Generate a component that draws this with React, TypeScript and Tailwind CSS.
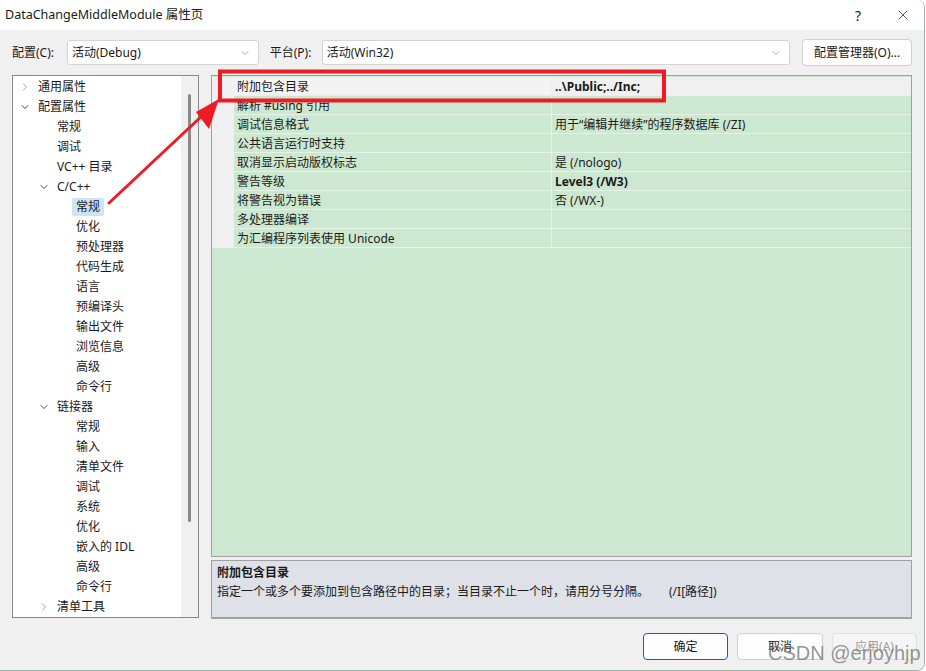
import { ChevronDown, ChevronRight, X } from 'lucide-react'

type TreeItem = { label: string; level: 0 | 1 | 2; chevron?: 'open' | 'closed'; selected?: boolean }

const TREE: TreeItem[] = [
  { label: '通用属性', level: 0, chevron: 'closed' },
  { label: '配置属性', level: 0, chevron: 'open' },
  { label: '常规', level: 1 },
  { label: '调试', level: 1 },
  { label: 'VC++ 目录', level: 1 },
  { label: 'C/C++', level: 1, chevron: 'open' },
  { label: '常规', level: 2, selected: true },
  { label: '优化', level: 2 },
  { label: '预处理器', level: 2 },
  { label: '代码生成', level: 2 },
  { label: '语言', level: 2 },
  { label: '预编译头', level: 2 },
  { label: '输出文件', level: 2 },
  { label: '浏览信息', level: 2 },
  { label: '高级', level: 2 },
  { label: '命令行', level: 2 },
  { label: '链接器', level: 1, chevron: 'open' },
  { label: '常规', level: 2 },
  { label: '输入', level: 2 },
  { label: '清单文件', level: 2 },
  { label: '调试', level: 2 },
  { label: '系统', level: 2 },
  { label: '优化', level: 2 },
  { label: '嵌入的 IDL', level: 2 },
  { label: '高级', level: 2 },
  { label: '命令行', level: 2 },
  { label: '清单工具', level: 1, chevron: 'closed' },
]

const INDENT = ['pl-[6px]', 'pl-[25px]', 'pl-[44px]']

type Prop = { name: string; value: string; bold?: boolean; selected?: boolean }

const PROPS: Prop[] = [
  { name: '附加包含目录', value: '..\\Public;../Inc;', bold: true, selected: true },
  { name: '解析 #using 引用', value: '' },
  { name: '调试信息格式', value: '用于“编辑并继续”的程序数据库 (/ZI)' },
  { name: '公共语言运行时支持', value: '' },
  { name: '取消显示启动版权标志', value: '是 (/nologo)' },
  { name: '警告等级', value: 'Level3 (/W3)', bold: true },
  { name: '将警告视为错误', value: '否 (/WX-)' },
  { name: '多处理器编译', value: '' },
  { name: '为汇编程序列表使用 Unicode', value: '' },
]

function Combo({ text, width }: { text: string; width: string }) {
  return (
    <div className={`${width} h-[25px] bg-white border border-[#d4d4d4] rounded-[3px] flex items-center justify-between pl-[4px] pr-[7px]`}>
      <span>{text}</span>
      <ChevronDown size={12} strokeWidth={1.2} className="text-[#707070]" />
    </div>
  )
}

export default function App() {
  return (
    <div
      className="relative w-[926px] h-[671px] bg-white overflow-hidden text-[12px] text-[#1a1a1a]"
      style={{ fontFamily: '"Noto Sans", "Noto Sans CJK SC", sans-serif' }}
    >
      <div className="flex flex-col h-full w-[925px] border-r border-b border-[#9fb3a6] rounded-tr-[8px] rounded-br-[8px] overflow-hidden">
        <div className="h-[30px] bg-white flex items-center justify-between pl-[5px] pr-[13px] shrink-0">
          <span className="text-[12.5px]">DataChangeMiddleModule 属性页</span>
          <div className="flex items-center gap-[34px]">
            <span className="text-[14px]">?</span>
            <X size={16} strokeWidth={1.1} />
          </div>
        </div>

        <div className="flex-1 bg-[#f0f0f0] flex flex-col px-[12px]">
          <div className="mt-[10px] h-[25px] flex items-center">
            <span className="w-[55px]">配置(C):</span>
            <Combo text="活动(Debug)" width="w-[192px]" />
            <span className="ml-[11px] w-[52px]">平台(P):</span>
            <Combo text="活动(Win32)" width="w-[469px]" />
            <button className="ml-[12px] h-[27px] w-[110px] bg-[#fdfdfd] border border-[#d0d0d0] rounded-[4px] text-[12px]">
              配置管理器(O)...
            </button>
          </div>

          <div className="mt-[10px] flex gap-[12px]">
            <div className="w-[187px] h-[543px] border border-[#828790] bg-white flex">
              <div className="flex-1 pt-[1px]">
                {TREE.map((item, i) => (
                  <div key={i} className={`h-[20px] flex items-center ${INDENT[item.level]}`}>
                    <span className="w-[12px] flex justify-center">
                      {item.chevron === 'closed' && <ChevronRight size={12} strokeWidth={1.6} className="text-[#8a8a8a]" />}
                      {item.chevron === 'open' && <ChevronDown size={12} strokeWidth={1.8} className="text-[#333]" />}
                    </span>
                    <span
                      className={`ml-[3px] h-[18px] px-[4px] flex items-center rounded-[2px] ${item.selected ? 'bg-[#cce4f7]' : ''}`}
                    >
                      {item.label}
                    </span>
                  </div>
                ))}
              </div>
              <div className="w-[17px] bg-[#f0f0f0] flex justify-center pt-[18px]">
                <div className="w-[3px] h-[428px] bg-[#8a8a8a] rounded-full" />
              </div>
            </div>

            <div className="flex-1 flex flex-col gap-[3px]">
              <div className="h-[482px] border border-[#a0a0a0] bg-[#cde8d0] flex flex-col pt-[1px]">
                {PROPS.map((p, i) => (
                  <div key={i} className="h-[19px] flex">
                    <div className="w-[22px] bg-[#f0f0f0]" />
                    <div
                      className={`w-[318px] pl-[3px] pt-[2px] flex items-center border-b border-r border-[#e6f1e7] ${p.selected ? 'bg-[#f3f3f3]' : ''}`}
                    >
                      {p.name}
                    </div>
                    <div
                      className={`flex-1 pl-[3px] pt-[2px] flex items-center border-b border-[#e6f1e7] ${p.selected ? 'bg-[#f0f0f0]' : ''} ${p.bold ? 'font-bold' : ''}`}
                    >
                      {p.value}
                    </div>
                  </div>
                ))}
              </div>
              <div className="h-[59px] border border-[#a0a0a0] border-b-2 bg-[#dfe1e8] px-[5px] pt-[2px] flex flex-col">
                <span className="font-bold leading-[19px]">附加包含目录</span>
                <span className="leading-[19px]">
                  指定一个或多个要添加到包含路径中的目录；当目录不止一个时，请用分号分隔。
                  <span className="ml-[20px]">(/I[路径])</span>
                </span>
              </div>
            </div>
          </div>

          <div className="mt-[14px] flex justify-end gap-[9px] mr-[-5px]">
            <button className="w-[85px] h-[27px] bg-[#fdfdfd] border border-[#0067c0] rounded-[4px]">确定</button>
            <button className="w-[86px] h-[27px] bg-[#fdfdfd] border border-[#d0d0d0] rounded-[4px]">取消</button>
            <button className="w-[85px] h-[27px] bg-[#f5f5f5] border border-[#e0e0e0] rounded-[4px] text-[#a0a0a0]">
              应用(A)
            </button>
          </div>
        </div>
      </div>

      <svg className="absolute inset-0 pointer-events-none" width="926" height="671">
        <rect x="220" y="71.5" width="444" height="29" fill="none" stroke="#ed1c24" strokeWidth="4" />
        <line x1="109" y1="203" x2="204" y2="114" stroke="#ed1c24" strokeWidth="3" strokeLinecap="round" />
        <polygon points="219,99 196,112 209,129" fill="#ed1c24" />
      </svg>

      <span
        className="absolute left-[768px] top-[638px] text-[20px] text-[#7a7a7a]/80 pointer-events-none"
        style={{ fontFamily: '"Liberation Sans", sans-serif' }}
      >
        CSDN @erjoyhjp
      </span>
    </div>
  )
}
